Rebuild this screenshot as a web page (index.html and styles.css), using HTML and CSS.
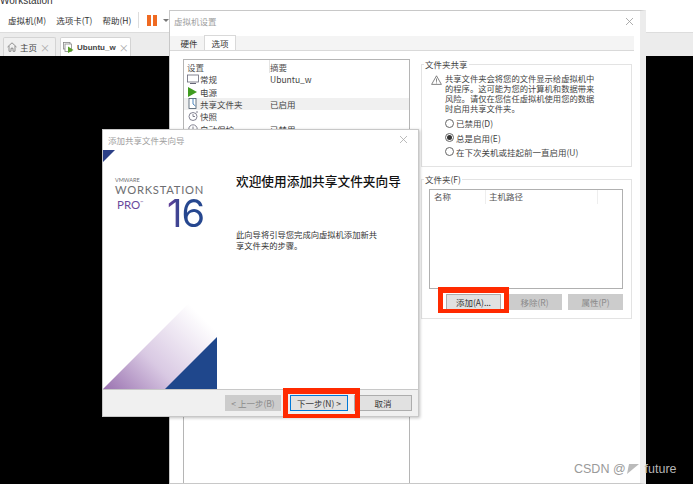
FILE: index.html
```html
<!DOCTYPE html>
<html lang="zh-CN">
<head>
    <meta charset="UTF-8">
    <title>虚拟机设置</title>
    <link rel="stylesheet" href="styles.css">
</head>
<body>
    <div class="app">
        <div class="app-title"><span>Workstation</span></div>
        <div class="menu-bar">
            <span class="menu-item">虚拟机(M)</span>
            <span class="menu-item">选项卡(T)</span>
            <span class="menu-item">帮助(H)</span>
            <span class="menu-sep"></span>
            <span class="pause"><i></i><i></i></span>
            <span class="caret"></span>
        </div>
        <div class="tab-bar">
            <div class="app-tab home-tab">
                <svg width="10" height="10" viewBox="0 0 10 10"><path d="M0.5 5 L5 0.8 L9.5 5 M2 4 V9.3 H4 V6.2 H6 V9.3 H8 V4" fill="none" stroke="#777" stroke-width="0.8"/></svg>
                <span class="home-name">主页</span>
                <b class="tab-x">×</b>
            </div>
            <div class="app-tab vm-tab">
                <svg width="11" height="11" viewBox="0 0 11 11"><rect x="0.5" y="0.5" width="6.5" height="6.5" fill="none" stroke="#888" stroke-width="0.8"/><rect x="2" y="2" width="6.5" height="7.5" fill="#fff" stroke="#888" stroke-width="0.8"/><path d="M5 4.5 L10.5 8 L5 11 Z" fill="#5aa02c"/></svg>
                <span class="vm-name">Ubuntu_w</span>
                <b class="tab-x">×</b>
            </div>
        </div>
        <div class="screen"></div>
    </div>

    <div class="settings">
        <div class="win-title">
            <span>虚拟机设置</span>
            <svg class="win-x" width="7" height="7" viewBox="0 0 7 7"><path d="M0 0 L7 7 M7 0 L0 7" stroke="#999" stroke-width="0.8"/></svg>
        </div>
        <div class="settings-tabs">
            <span class="s-tab">硬件</span>
            <span class="s-tab active">选项</span>
        </div>
        <div class="settings-body">
            <div class="option-list">
                <div class="list-head">
                    <span class="col-name">设置</span>
                    <span class="col-sum">摘要</span>
                </div>
                <div class="list-row">
                    <span class="col-name">
                        <svg width="12" height="10" viewBox="0 0 12 10"><rect x="0.5" y="1" width="11" height="7" fill="none" stroke="#667" stroke-width="0.8"/><path d="M3 9.5 H9" stroke="#667"/></svg>
                        常规
                    </span>
                    <span class="col-sum">Ubuntu_w</span>
                </div>
                <div class="list-row">
                    <span class="col-name">
                        <svg width="12" height="10" viewBox="0 0 12 10"><path d="M1 0 L10 5 L1 10 Z" fill="#3f9b1f"/></svg>
                        电源
                    </span>
                </div>
                <div class="list-row selected">
                    <span class="col-name">
                        <svg width="12" height="11" viewBox="0 0 12 11"><rect x="2" y="0.5" width="7" height="10" fill="#fff" stroke="#456" stroke-width="0.8"/><path d="M6 0.5 V6 L8.5 8" fill="none" stroke="#3a78b5" stroke-width="0.9"/></svg>
                        共享文件夹
                    </span>
                    <span class="col-sum">已启用</span>
                </div>
                <div class="list-row">
                    <span class="col-name">
                        <svg width="12" height="10" viewBox="0 0 12 10"><circle cx="6" cy="5.5" r="4" fill="none" stroke="#667" stroke-width="0.8"/><path d="M6 3 V5.5 H8 M9 1 L11 1" fill="none" stroke="#667" stroke-width="0.8"/></svg>
                        快照
                    </span>
                </div>
                <div class="list-row">
                    <span class="col-name">
                        <svg width="12" height="10" viewBox="0 0 12 10"><circle cx="6" cy="5" r="4.2" fill="none" stroke="#667" stroke-width="0.8"/><path d="M6 2.5 V5.5 H8" fill="none" stroke="#667" stroke-width="0.8"/></svg>
                        自动保护
                    </span>
                    <span class="col-sum">已禁用</span>
                </div>
            </div>

            <div class="side">
                <fieldset class="group share-group">
                    <legend>文件夹共享</legend>
                    <div class="warning">
                        <svg width="11" height="10" viewBox="0 0 11 10"><path d="M5.5 0.8 L10.4 9.4 H0.6 Z" fill="none" stroke="#666" stroke-width="0.8"/><path d="M5.5 3.5 V6.8 M5.5 7.5 V8.4" stroke="#666" stroke-width="0.8"/></svg>
                        <p>共享文件夹会将您的文件显示给虚拟机中<br>的程序。这可能为您的计算机和数据带来<br>风险。请仅在您信任虚拟机使用您的数据<br>时启用共享文件夹。</p>
                    </div>
                    <div class="radio-line"><span class="radio"></span>已禁用(D)</div>
                    <div class="radio-line"><span class="radio on"></span>总是启用(E)</div>
                    <div class="radio-line"><span class="radio"></span>在下次关机或挂起前一直启用(U)</div>
                </fieldset>
                <fieldset class="group folder-group">
                    <legend>文件夹(F)</legend>
                    <div class="folder-list">
                        <div class="folder-head">
                            <span class="f-name">名称</span>
                            <span class="f-path">主机路径</span>
                        </div>
                    </div>
                    <div class="folder-btns">
                        <span class="button">添加(A)...</span>
                        <span class="button disabled">移除(R)</span>
                        <span class="button disabled">属性(P)</span>
                    </div>
                </fieldset>
            </div>
        </div>
    </div>

    <div class="wizard">
        <div class="win-title wizard-title">
            <span>添加共享文件夹向导</span>
            <svg class="win-x" width="7" height="7" viewBox="0 0 7 7"><path d="M0 0 L7 7 M7 0 L0 7" stroke="#aaa" stroke-width="0.8"/></svg>
        </div>
        <div class="wizard-main">
            <div class="banner">
                <svg class="banner-corner" width="12" height="12" viewBox="0 0 12 12"><path d="M0 0 H12 L0 12 Z" fill="#2b3f86"/></svg>
                <div class="logo">
                    <div class="logo-vm">VMWARE</div>
                    <div class="logo-ws">WORKSTATION</div>
                    <div class="logo-pro">
                        <span class="pro">PRO<sup>™</sup></span>
                        <span class="num">16</span>
                    </div>
                </div>
                <svg class="banner-art" width="114" height="114" viewBox="0 0 114 114">
                    <defs>
                        <linearGradient id="fade" x1="0" y1="1" x2="0.75" y2="0.25">
                            <stop offset="0" stop-color="#9a72b0"/>
                            <stop offset="0.45" stop-color="#d9c9e3"/>
                            <stop offset="1" stop-color="#ffffff"/>
                        </linearGradient>
                    </defs>
                    <path d="M0 114 L114 0 V114 Z" fill="url(#fade)"/>
                    <path d="M62 114 L114 62 V114 Z" fill="#1f478c"/>
                </svg>
            </div>
            <div class="wizard-text">
                <h1>欢迎使用添加共享文件夹向导</h1>
                <p>此向导将引导您完成向虚拟机添加新共<br>享文件夹的步骤。</p>
            </div>
        </div>
        <div class="wizard-foot">
            <span class="button disabled prev-btn">&lt; 上一步(B)</span>
            <span class="button primary">下一步(N) &gt;</span>
            <span class="button cancel-btn">取消</span>
        </div>
    </div>

    <div class="red-box add-mark"></div>
    <div class="red-box next-mark"></div>

    <div class="watermark">
        <span>CSDN @</span>
        <svg width="12" height="10" viewBox="0 0 12 10"><path d="M0 10 L12 0 H2 Z" fill="#bbb"/></svg>
        <span class="wm-user">future</span>
    </div>
</body>
</html>
```

FILE: styles.css
```css
* {
    box-sizing: border-box;
}
html, body {
    margin: 0;
    padding: 0;
    height: 484px;
    overflow: hidden;
    background: #fff;
}
body {
    font-family: "Noto Sans CJK SC", "Noto Sans", sans-serif;
    font-size: 8.5px;
    color: #444;
    position: relative;
}
p {
    margin: 0;
}

/* app behind the dialogs */
.app {
    height: 484px;
    display: flex;
    flex-direction: column;
}
.app-title {
    height: 8px;
    overflow: hidden;
    font-size: 10px;
    line-height: 5px;
    color: #333;
    font-family: "Liberation Sans", sans-serif;
}
.app-title span {
    display: block;
    margin-top: -2px;
}
.menu-bar {
    height: 25px;
    display: flex;
    align-items: center;
    padding-left: 8px;
    border-bottom: 1px solid #ddd;
    color: #333;
}
.menu-item {
    margin-right: 10px;
    white-space: nowrap;
}
.menu-sep {
    width: 1px;
    height: 16px;
    background: #ddd;
    margin: 0 8px 0 -3px;
}
.pause {
    display: flex;
    gap: 2px;
}
.pause i {
    display: block;
    width: 4px;
    height: 11px;
    background: #ef6a22;
}
.caret {
    margin-left: 6px;
    border: 3px solid transparent;
    border-top: 3px solid #777;
    border-bottom: 0;
}
.tab-bar {
    height: 23px;
    background: #ececec;
    display: flex;
    align-items: flex-end;
    padding-left: 3px;
    gap: 4px;
}
.app-tab {
    height: 19px;
    display: flex;
    align-items: center;
    gap: 3px;
    border: 1px solid #d4d4d4;
    border-bottom: 0;
    border-radius: 2px 2px 0 0;
}
.app-tab svg {
    flex: none;
}
.home-tab {
    width: 53px;
    padding: 0 5px 0 3px;
    background: #f0f0f0;
}
.vm-tab {
    width: 71px;
    padding: 0 4px 0 2px;
    background: #fff;
}
.home-name {
    white-space: nowrap;
}
.vm-name {
    font-family: "Liberation Sans", sans-serif;
    font-weight: bold;
    font-size: 8px;
}
.tab-x {
    margin-left: auto;
    font-weight: normal;
    font-size: 10px;
    color: #aaa;
}
.screen {
    flex: 1;
    background: #000;
}

/* windows */
.settings, .wizard {
    position: absolute;
    background: #f0f0f0;
    border: 1px solid #c8c8c8;
}
.settings {
    left: 169px;
    top: 10px;
    width: 477px;
    height: 474px;
    display: flex;
    flex-direction: column;
    padding: 0 6px 0 4px;
    background: #fff;
    border-right: 6px solid #ececec;
}
.settings .win-title {
    margin: 0 -6px 0 -4px;
    padding: 0 7px 5px 4px;
}
.win-title {
    height: 25px;
    flex: none;
    display: flex;
    align-items: center;
    justify-content: space-between;
    background: #fff;
    color: #a0a0a0;
}
.settings-tabs {
    height: 15px;
    display: flex;
    align-items: flex-end;
    flex: none;
    border-bottom: 1px solid #d9d9d9;
    margin-right: 0;
    color: #333;
    background: #f4f4f4;
    margin-left: -4px;
    padding-left: 4px;
}
.s-tab {
    width: 30px;
    height: 13px;
    line-height: 12px;
    text-align: center;
}
.s-tab.active {
    width: 32px;
    height: 15px;
    line-height: 14px;
    background: #fff;
    border: 1px solid #d9d9d9;
    border-bottom: 0;
}
.settings-body {
    flex: 1;
    display: flex;
    padding: 8px 0 0 9px;
}
.option-list {
    width: 227px;
    border: 1px solid #b5b5b5;
    border-bottom: 0;
    flex: none;
}
.list-head {
    height: 13px;
    display: flex;
    align-items: center;
    color: #555;
}
.list-row {
    height: 12.4px;
    display: flex;
    align-items: center;
    white-space: nowrap;
}
.list-row.selected {
    background: #f0f0f0;
}
.col-name {
    width: 86px;
    padding-left: 3px;
    display: flex;
    align-items: center;
    gap: 1px;
}
.list-head .col-name {
    border-right: 1px solid #e4e4e4;
    height: 100%;
}
.col-sum {
    padding-left: 0;
}
.side {
    width: 211px;
    margin-left: 11px;
    display: flex;
    flex-direction: column;
}
.group {
    margin: 0;
    padding: 0;
    border: 1px solid #e3e3e3;
    min-width: 0;
}
.group legend {
    padding: 0 1px;
    line-height: 9px;
    color: #444;
}
.share-group {
    height: 107px;
    margin-top: 1px;
    padding: 4px 0 0 9px;
}
.share-group legend {
    margin-left: -7px;
}
.warning {
    display: flex;
    gap: 3px;
    font-size: 8.3px;
    line-height: 10px;
    margin-bottom: 3px;
}
.warning svg {
    flex: none;
    margin-top: 2px;
}
.radio-line {
    height: 14.4px;
    display: flex;
    align-items: center;
    gap: 2px;
    padding-left: 14px;
}
.radio {
    width: 9px;
    height: 9px;
    border: 1px solid #666;
    border-radius: 50%;
    background: #fff;
    display: flex;
    align-items: center;
    justify-content: center;
}
.radio.on::after {
    content: "";
    width: 5px;
    height: 5px;
    border-radius: 50%;
    background: #333;
}
.folder-group {
    height: 144px;
    margin-top: 8px;
    padding: 5px 8px 0 7px;
}
.folder-group legend {
    margin-left: -5px;
}
.folder-list {
    height: 100px;
    border: 1px solid #b0b0b0;
}
.folder-head {
    display: flex;
    height: 14px;
    line-height: 13px;
    color: #555;
}
.f-name {
    width: 56px;
    padding-left: 4px;
    border-right: 1px solid #eee;
}
.f-path {
    width: 112px;
    padding-left: 3px;
    border-right: 1px solid #eee;
}
.folder-btns {
    display: flex;
    justify-content: flex-end;
    gap: 6px;
    margin-top: 5px;
}
.button {
    width: 55px;
    height: 16px;
    line-height: 15px;
    text-align: center;
    background: #e1e1e1;
    border: 1px solid #adadad;
    color: #333;
    white-space: nowrap;
}
.button.disabled {
    background: #cccccc;
    border-color: #cccccc;
    color: #8a8a8a;
}
.button.primary {
    background: #e1e1e1;
    border: 1px solid #0078d7;
}

/* wizard */
.wizard {
    left: 102px;
    top: 129px;
    width: 317px;
    height: 288px;
    display: flex;
    flex-direction: column;
    box-shadow: 1px 1px 3px rgba(0, 0, 0, 0.25);
    background: #fff;
}
.wizard-title {
    height: 20px;
    padding: 0 11px 1px 5px;
}
.wizard-main {
    flex: 1;
    display: flex;
}
.banner {
    width: 114px;
    flex: none;
    position: relative;
}
.banner-corner {
    position: absolute;
    left: 0;
    top: 0;
}
.banner-art {
    position: absolute;
    left: 0;
    bottom: 0;
}
.logo {
    padding: 27px 0 0 12px;
    font-family: "Lato", "Open Sans", sans-serif;
    color: #6d6e71;
}
.logo-vm {
    font-size: 5.5px;
    line-height: 7px;
}
.logo-ws {
    font-size: 11.2px;
    line-height: 12px;
    letter-spacing: 0.75px;
    white-space: nowrap;
}
.logo-pro {
    display: flex;
    justify-content: space-between;
    width: 89px;
}
.pro {
    font-size: 11.5px;
    line-height: 13px;
    margin: 2px 0 0 2px;
    color: #6a4a9c;
}
.pro sup {
    font-size: 4px;
    vertical-align: 5px;
    line-height: 0;
}
.num {
    font-family: "Inter", "Lato", sans-serif;
    font-size: 38px;
    line-height: 30px;
    margin-top: 2px;
    letter-spacing: -1px;
    background: linear-gradient(90deg, #6a3f98, #26478f 45%);
    -webkit-background-clip: text;
    background-clip: text;
    color: transparent;
}
.wizard-text {
    padding: 22px 0 0 19px;
    color: #333;
}
.wizard-text h1 {
    margin: 0;
    font-size: 12.7px;
    line-height: 18px;
    font-weight: 500;
    color: #111;
    white-space: nowrap;
}
.wizard-text p {
    margin-top: 39px;
    font-size: 8.3px;
    line-height: 11px;
}
.wizard-foot {
    height: 27px;
    flex: none;
    background: #f0f0f0;
    border-top: 1px solid #c8c8c8;
    display: flex;
    align-items: center;
    justify-content: flex-end;
    padding-right: 6px;
}
.prev-btn {
    margin-right: 9px;
}
.wizard-foot .button {
    width: 58px;
}
.wizard-foot .prev-btn {
    width: 56px;
}
.cancel-btn {
    margin-left: 6px;
}

/* annotations drawn over the screenshot */
.red-box {
    position: absolute;
    border-style: solid;
    border-color: #ff2a00;
    border-width: 6px 5px 4px 5px;
}
.add-mark {
    left: 438px;
    top: 287px;
    width: 71px;
    height: 26px;
}
.next-mark {
    left: 283px;
    top: 388px;
    width: 77px;
    height: 30px;
}
.watermark {
    position: absolute;
    left: 574px;
    top: 461px;
    display: flex;
    align-items: center;
    gap: 1px;
    font-family: "Liberation Sans", sans-serif;
    font-size: 12.5px;
    line-height: 16px;
    color: #9a9a9a;
}
.wm-user {
    margin-left: 5px;
    color: #b5b5b5;
}
```
